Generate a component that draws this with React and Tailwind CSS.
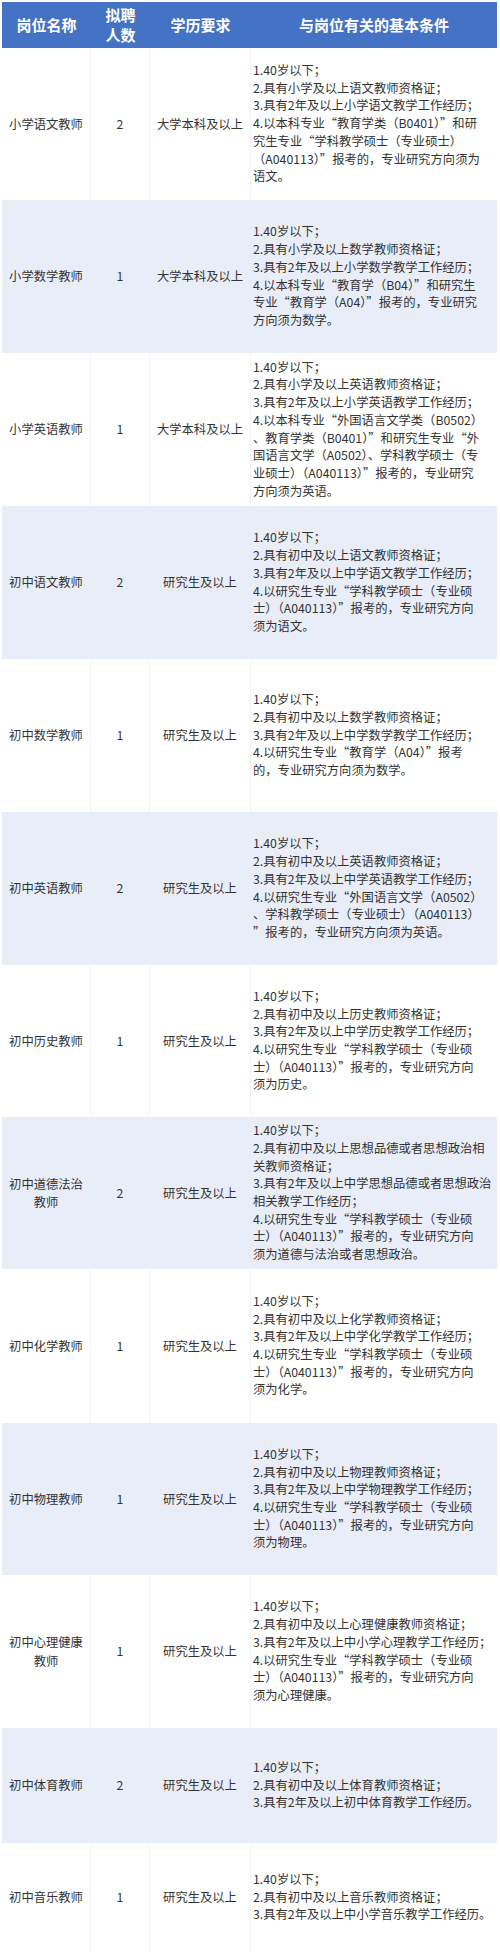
import React from "react";

const rows = [
  {
    h: "h-[152px]",
    name: ["小学语文教师"],
    n: "2",
    edu: "大学本科及以上",
    lines: [
      "1.40岁以下；",
      "2.具有小学及以上语文教师资格证；",
      "3.具有2年及以上小学语文教学工作经历；",
      "4.以本科专业“教育学类（B0401）”和研",
      "究生专业“学科教学硕士（专业硕士）",
      "（A040113）”报考的，专业研究方向须为",
      "语文。",
    ],
  },
  {
    h: "h-[153px]",
    name: ["小学数学教师"],
    n: "1",
    edu: "大学本科及以上",
    lines: [
      "1.40岁以下；",
      "2.具有小学及以上数学教师资格证；",
      "3.具有2年及以上小学数学教学工作经历；",
      "4.以本科专业“教育学（B04）”和研究生",
      "专业“教育学（A04）”报考的，专业研究",
      "方向须为数学。",
    ],
  },
  {
    h: "h-[153px]",
    name: ["小学英语教师"],
    n: "1",
    edu: "大学本科及以上",
    lines: [
      "1.40岁以下；",
      "2.具有小学及以上英语教师资格证；",
      "3.具有2年及以上小学英语教学工作经历；",
      "4.以本科专业“外国语言文学类（B0502）",
      "、教育学类（B0401）”和研究生专业“外",
      "国语言文学（A0502）、学科教学硕士（专",
      "业硕士）（A040113）”报考的，专业研究",
      "方向须为英语。",
    ],
  },
  {
    h: "h-[153px]",
    name: ["初中语文教师"],
    n: "2",
    edu: "研究生及以上",
    lines: [
      "1.40岁以下；",
      "2.具有初中及以上语文教师资格证；",
      "3.具有2年及以上中学语文教学工作经历；",
      "4.以研究生专业“学科教学硕士（专业硕",
      "士）（A040113）”报考的，专业研究方向",
      "须为语文。",
    ],
  },
  {
    h: "h-[153px]",
    name: ["初中数学教师"],
    n: "1",
    edu: "研究生及以上",
    lines: [
      "1.40岁以下；",
      "2.具有初中及以上数学教师资格证；",
      "3.具有2年及以上中学数学教学工作经历；",
      "4.以研究生专业“教育学（A04）”报考",
      "的，专业研究方向须为数学。",
    ],
  },
  {
    h: "h-[153px]",
    name: ["初中英语教师"],
    n: "2",
    edu: "研究生及以上",
    lines: [
      "1.40岁以下；",
      "2.具有初中及以上英语教师资格证；",
      "3.具有2年及以上中学英语教学工作经历；",
      "4.以研究生专业“外国语言文学（A0502）",
      "、学科教学硕士（专业硕士）（A040113）",
      "”报考的，专业研究方向须为英语。",
    ],
  },
  {
    h: "h-[152px]",
    name: ["初中历史教师"],
    n: "1",
    edu: "研究生及以上",
    lines: [
      "1.40岁以下；",
      "2.具有初中及以上历史教师资格证；",
      "3.具有2年及以上中学历史教学工作经历；",
      "4.以研究生专业“学科教学硕士（专业硕",
      "士）（A040113）”报考的，专业研究方向",
      "须为历史。",
    ],
  },
  {
    h: "h-[152px]",
    name: ["初中道德法治", "教师"],
    n: "2",
    edu: "研究生及以上",
    lines: [
      "1.40岁以下；",
      "2.具有初中及以上思想品德或者思想政治相",
      "关教师资格证；",
      "3.具有2年及以上中学思想品德或者思想政治",
      "相关教学工作经历；",
      "4.以研究生专业“学科教学硕士（专业硕",
      "士）（A040113）”报考的，专业研究方向",
      "须为道德与法治或者思想政治。",
    ],
  },
  {
    h: "h-[154px]",
    name: ["初中化学教师"],
    n: "1",
    edu: "研究生及以上",
    lines: [
      "1.40岁以下；",
      "2.具有初中及以上化学教师资格证；",
      "3.具有2年及以上中学化学教学工作经历；",
      "4.以研究生专业“学科教学硕士（专业硕",
      "士）（A040113）”报考的，专业研究方向",
      "须为化学。",
    ],
  },
  {
    h: "h-[152px]",
    name: ["初中物理教师"],
    n: "1",
    edu: "研究生及以上",
    lines: [
      "1.40岁以下；",
      "2.具有初中及以上物理教师资格证；",
      "3.具有2年及以上中学物理教学工作经历；",
      "4.以研究生专业“学科教学硕士（专业硕",
      "士）（A040113）”报考的，专业研究方向",
      "须为物理。",
    ],
  },
  {
    h: "h-[153px]",
    name: ["初中心理健康", "教师"],
    n: "1",
    edu: "研究生及以上",
    lines: [
      "1.40岁以下；",
      "2.具有初中及以上心理健康教师资格证；",
      "3.具有2年及以上中小学心理教学工作经历；",
      "4.以研究生专业“学科教学硕士（专业硕",
      "士）（A040113）”报考的，专业研究方向",
      "须为心理健康。",
    ],
  },
  {
    h: "h-[115px]",
    name: ["初中体育教师"],
    n: "2",
    edu: "研究生及以上",
    lines: [
      "1.40岁以下；",
      "2.具有初中及以上体育教师资格证；",
      "3.具有2年及以上初中体育教学工作经历。",
    ],
  },
  {
    h: "h-[109px]",
    name: ["初中音乐教师"],
    n: "1",
    edu: "研究生及以上",
    lines: [
      "1.40岁以下；",
      "2.具有初中及以上音乐教师资格证；",
      "3.具有2年及以上中小学音乐教学工作经历。",
    ],
  },
];

function Row({ r, tinted }) {
  const bg = tinted ? "bg-[#e9edf8]" : "bg-white";
  const line = tinted ? "border-r border-[#e9edf8]" : "border-r border-[#f1f2f4]";
  return (
    <div className={`grid grid-cols-[89px_59px_101px_246px] ${r.h} ${bg} text-[#333333]`}>
      <div className={`flex flex-col items-center justify-center text-center text-[12.3px] leading-[18.3px] ${line}`}>
        {r.name.map((t, i) => (
          <div key={i} className="whitespace-nowrap">{t}</div>
        ))}
      </div>
      <div className={`flex items-center justify-center text-[12.3px] ${line}`}>{r.n}</div>
      <div className={`flex items-center justify-center text-[12.3px] whitespace-nowrap ${line}`}>{r.edu}</div>
      <div className="flex flex-col justify-center pl-[2px] text-[12.3px] leading-[17.7px]">
        {r.lines.map((t, i) => (
          <div key={i} className="whitespace-nowrap">{t}</div>
        ))}
      </div>
    </div>
  );
}

export default function App() {
  return (
    <div
      lang="zh-CN"
      className="w-[500px] bg-white pt-[2px] pl-[2px] pr-[3px] pb-[4px] font-['Noto_Sans_CJK_SC','Noto_Sans',sans-serif]"
    >
      <div className="grid h-[46px] grid-cols-[89px_59px_101px_246px] bg-[#4472c4] font-bold text-white text-[15px]">
        <div className="flex items-center justify-center">岗位名称</div>
        <div className="flex flex-col items-center justify-center leading-[20px]">
          <div>拟聘</div>
          <div>人数</div>
        </div>
        <div className="flex items-center justify-center">学历要求</div>
        <div className="flex items-center justify-center">与岗位有关的基本条件</div>
      </div>
      {rows.map((r, i) => (
        <Row key={i} r={r} tinted={i % 2 === 1} />
      ))}
    </div>
  );
}
